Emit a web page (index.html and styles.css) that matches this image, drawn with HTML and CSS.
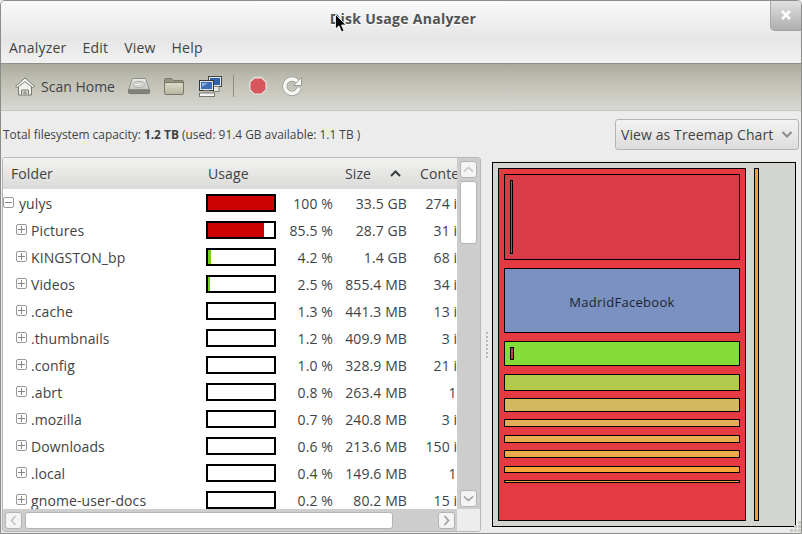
FILE: index.html
```html
<!DOCTYPE html>
<html lang="en">
<head>
    <meta charset="UTF-8">
    <meta name="viewport" content="width=device-width, initial-scale=1.0">
    <title>Disk Usage Analyzer</title>
    <link rel="stylesheet" href="styles.css">
</head>
<body>
<div class="window">
    <div class="top-bar">
        <div class="title">Disk Usage Analyzer</div>
        <div class="menubar">
            <span class="menu-item">Analyzer</span>
            <span class="menu-item">Edit</span>
            <span class="menu-item">View</span>
            <span class="menu-item">Help</span>
        </div>
    </div>
    <div class="close-btn">
        <svg width="12" height="12" viewBox="0 0 12 12"><path d="M2 2 L10 10 M10 2 L2 10" stroke="#fff" stroke-width="2.6"/></svg>
    </div>

    <div class="toolbar">
        <span class="tool tool-home">
            <svg width="22" height="22" viewBox="0 0 22 22">
                <path d="M4.5 10 V20 H17.5 V10 L11 5Z" fill="#f1f1ee" stroke="#77786f"/>
                <path d="M7.5 20 V15 H14.5 V20 M10 20 V17 H12 V20" fill="#d8d8d2" stroke="#77786f"/>
                <path d="M1.5 11.5 L11 3 L20.500 11.500 L18.500 12.500 L11 6.500 L3.500 12.500Z" fill="#fafaf8" stroke="#77786f" stroke-linejoin="round"/>
            </svg>
            Scan Home
        </span>
        <span class="tool tool-drive">
            <svg width="24" height="18" viewBox="0 0 24 18">
                <defs><linearGradient id="dr" x1="0" y1="0" x2="0" y2="1"><stop offset="0" stop-color="#ececea"/><stop offset="1" stop-color="#c4c4c0"/></linearGradient></defs>
                <path d="M5.500 1.500 H18.500 L22.500 13 H1.500Z" fill="url(#dr)" stroke="#90908a"/>
                <path d="M1.500 13 H22.500 V15.500 Q22.500 16.500 21.500 16.500 H2.500 Q1.500 16.500 1.500 15.500Z" fill="#85857e" stroke="#77776f"/>
                <ellipse cx="12" cy="7.500" rx="6" ry="3.200" fill="#d4d4d0" stroke="#b0b0ab"/>
                <rect x="8" y="7" width="5" height="1" fill="#f4f4f2"/>
            </svg>
        </span>
        <span class="tool tool-folder">
            <svg width="20" height="19" viewBox="0 0 20 19">
                <defs><linearGradient id="fo" x1="0" y1="0" x2="0" y2="1"><stop offset="0" stop-color="#dcddc9"/><stop offset="1" stop-color="#b4b59d"/></linearGradient></defs>
                <path d="M.5 3 Q.5 1.500 2 1.500 H7.500 L9.500 3.500 H18 Q19.500 3.500 19.500 5 V9 H.5Z" fill="#95967e" stroke="#77776a"/>
                <rect x=".5" y="5.500" width="19" height="12" rx="1.500" fill="url(#fo)" stroke="#77776a"/>
            </svg>
        </span>
        <span class="tool tool-network">
            <svg width="23" height="21" viewBox="0 0 23 21">
                <rect x="9.500" y=".5" width="13" height="10" fill="#e4e4e0" stroke="#44484a"/>
                <rect x="11" y="2" width="10" height="7" fill="#2f62a8"/>
                <rect x="14" y="10.500" width="6" height="5" fill="#e6e6e2" stroke="#85857f"/>
                <rect x=".5" y="4.500" width="14" height="10" fill="#e4e4e0" stroke="#33383a"/>
                <rect x="2" y="6" width="11" height="7" fill="#3a6db4"/>
                <path d="M3 7 H9 L3 11Z" fill="#86aee0"/>
                <rect x="5" y="14.500" width="5" height="2" fill="#aaa"/>
                <rect x=".5" y="17" width="15" height="3.500" fill="#f6f6f3" stroke="#77776f"/>
            </svg>
        </span>
        <span class="tool-sep"></span>
        <span class="tool tool-stop">
            <svg width="20" height="20" viewBox="0 0 20 20">
                <path d="M6 .8 H14 L19.200 6 V14 L14 19.200 H6 L.8 14 V6Z" fill="#e6e6e2" stroke="#c4c4be"/>
                <path d="M6.500 2.500 H13.500 L17.500 6.500 V13.500 L13.500 17.500 H6.500 L2.500 13.500 V6.500Z" fill="#d9565c"/>
            </svg>
        </span>
        <span class="tool tool-refresh">
            <svg width="21" height="20" viewBox="0 0 21 20">
                <path d="M15.500 5.500 A7.200 7.200 0 1 0 17 12" fill="none" stroke="#9a9a92" stroke-width="5"/>
                <path d="M15.500 5.500 A7.200 7.200 0 1 0 17 12" fill="none" stroke="#f7f7f5" stroke-width="3.600"/>
                <path d="M19.500 1.500 V9.500 H11.500Z" fill="#f7f7f5" stroke="#9a9a92" stroke-linejoin="round"/>
            </svg>
        </span>
    </div>

    <div class="info-row">
        <span class="capacity">Total filesystem capacity: <b>1.2 TB</b> (used: 91.4 GB available: 1.1 TB )</span>
        <span class="combo">
            View as Treemap Chart
            <svg width="12" height="7" viewBox="0 0 12 7"><path d="M1.500 1 L6 5.500 L10.500 1" fill="none" stroke="#8a8a86" stroke-width="2"/></svg>
        </span>
    </div>

    <div class="main">
        <div class="tree-panel">
            <div class="tree-list">
                <div class="tree-cols tree-header">
                    <span class="head-folder">Folder</span>
                    <span class="head-usage">Usage</span>
                    <span></span>
                    <span class="head-size">Size
                        <svg width="11" height="7" viewBox="0 0 11 7"><path d="M1 6 L5.500 1.500 L10 6" fill="none" stroke="#3a3f41" stroke-width="2"/></svg>
                    </span>
                    <span class="head-contents">Contents</span>
                </div>
                <div class="tree-rows">
                    <div class="tree-cols row">
                        <span class="name root"><i class="exp minus"></i>yulys</span>
                        <span class="bar"><span class="fill red" style="width:100%"></span></span>
                        <span class="pct">100 %</span><span class="size">33.5 GB</span>
                        <span class="contents"><span>274 items</span></span>
                    </div>
                    <div class="tree-cols row">
                        <span class="name"><i class="exp"></i>Pictures</span>
                        <span class="bar"><span class="fill red" style="width:85.5%"></span></span>
                        <span class="pct">85.5 %</span><span class="size">28.7 GB</span>
                        <span class="contents"><span>31 items</span></span>
                    </div>
                    <div class="tree-cols row">
                        <span class="name"><i class="exp"></i>KINGSTON_bp</span>
                        <span class="bar"><span class="fill green" style="width:4.2%"></span></span>
                        <span class="pct">4.2 %</span><span class="size">1.4 GB</span>
                        <span class="contents"><span>68 items</span></span>
                    </div>
                    <div class="tree-cols row">
                        <span class="name"><i class="exp"></i>Videos</span>
                        <span class="bar"><span class="fill green" style="width:2.5%"></span></span>
                        <span class="pct">2.5 %</span><span class="size">855.4 MB</span>
                        <span class="contents"><span>34 items</span></span>
                    </div>
                    <div class="tree-cols row">
                        <span class="name"><i class="exp"></i>.cache</span>
                        <span class="bar"></span>
                        <span class="pct">1.3 %</span><span class="size">441.3 MB</span>
                        <span class="contents"><span>13 items</span></span>
                    </div>
                    <div class="tree-cols row">
                        <span class="name"><i class="exp"></i>.thumbnails</span>
                        <span class="bar"></span>
                        <span class="pct">1.2 %</span><span class="size">409.9 MB</span>
                        <span class="contents"><span>3 items</span></span>
                    </div>
                    <div class="tree-cols row">
                        <span class="name"><i class="exp"></i>.config</span>
                        <span class="bar"></span>
                        <span class="pct">1.0 %</span><span class="size">328.9 MB</span>
                        <span class="contents"><span>21 items</span></span>
                    </div>
                    <div class="tree-cols row">
                        <span class="name"><i class="exp"></i>.abrt</span>
                        <span class="bar"></span>
                        <span class="pct">0.8 %</span><span class="size">263.4 MB</span>
                        <span class="contents"><span>1 item</span></span>
                    </div>
                    <div class="tree-cols row">
                        <span class="name"><i class="exp"></i>.mozilla</span>
                        <span class="bar"></span>
                        <span class="pct">0.7 %</span><span class="size">240.8 MB</span>
                        <span class="contents"><span>3 items</span></span>
                    </div>
                    <div class="tree-cols row">
                        <span class="name"><i class="exp"></i>Downloads</span>
                        <span class="bar"></span>
                        <span class="pct">0.6 %</span><span class="size">213.6 MB</span>
                        <span class="contents"><span>150 items</span></span>
                    </div>
                    <div class="tree-cols row">
                        <span class="name"><i class="exp"></i>.local</span>
                        <span class="bar"></span>
                        <span class="pct">0.4 %</span><span class="size">149.6 MB</span>
                        <span class="contents"><span>1 item</span></span>
                    </div>
                    <div class="tree-cols row">
                        <span class="name"><i class="exp"></i>gnome-user-docs</span>
                        <span class="bar"></span>
                        <span class="pct">0.2 %</span><span class="size">80.2 MB</span>
                        <span class="contents"><span>15 items</span></span>
                    </div>
                </div>
            </div>
            <div class="vscroll">
                <span class="sb-btn sb-up"><svg width="11" height="7" viewBox="0 0 11 7"><path d="M1 5.500 L5.500 1.500 L10 5.500" fill="none" stroke="#c4c4c0" stroke-width="1.600"/></svg></span>
                <span class="sb-thumb-v"></span>
                <span class="sb-btn sb-down"><svg width="11" height="7" viewBox="0 0 11 7"><path d="M1 1.500 L5.500 5.500 L10 1.500" fill="none" stroke="#9a9a96" stroke-width="1.600"/></svg></span>
            </div>
            <div class="hscroll">
                <span class="sb-btn sb-left"><svg width="7" height="11" viewBox="0 0 7 11"><path d="M5.500 1 L1.500 5.500 L5.500 10" fill="none" stroke="#c4c4c0" stroke-width="1.600"/></svg></span>
                <span class="sb-thumb-h"></span>
                <span class="sb-btn sb-right"><svg width="7" height="11" viewBox="0 0 7 11"><path d="M1.500 1 L5.500 5.500 L1.500 10" fill="none" stroke="#9a9a96" stroke-width="1.600"/></svg></span>
            </div>
            <div class="corner"></div>
        </div>

        <div class="pane-grip"><i></i><i></i><i></i><i></i><i></i><i></i><i></i></div>

        <svg class="treemap" width="304" height="365" viewBox="492 162 304 365" shape-rendering="crispEdges">
            <rect class="tm" x="492.5" y="162.500" width="303" height="364" fill="#d3d6d0"/>
            <rect class="tm" x="498.500" y="168.500" width="247" height="352" fill="#e63a42"/>
            <rect class="tm" x="754.500" y="168.500" width="4" height="352" fill="#f89e38"/>
            <rect class="tm" x="504.500" y="174.500" width="235" height="85" fill="#d93c48"/>
            <rect class="tm" x="510.500" y="180.500" width="2" height="73" fill="#d93c48"/>
            <rect class="tm" x="504.500" y="268.500" width="235" height="64" fill="#7b91c1"/>
            <text class="tm-label" x="622" y="307" text-anchor="middle">MadridFacebook</text>
            <rect class="tm" x="504.500" y="341.500" width="235" height="24" fill="#86dc36"/>
            <rect class="tm" x="510.500" y="347.500" width="3" height="12" fill="#c4405a"/>
            <rect class="tm" x="504.500" y="374.500" width="235" height="16" fill="#b2ca4c"/>
            <rect class="tm" x="504.500" y="398.500" width="235" height="13" fill="#d5b862"/>
            <rect class="tm" x="504.500" y="419.500" width="235" height="7" fill="#e3ac58"/>
            <rect class="tm" x="504.500" y="435.500" width="235" height="7" fill="#e9ab4f"/>
            <rect class="tm" x="504.500" y="450.500" width="235" height="7" fill="#ecaa49"/>
            <rect class="tm" x="504.500" y="466.500" width="235" height="6" fill="#f8a53a"/>
            <rect class="tm" x="504.500" y="480.500" width="235" height="2" fill="#f0a040"/>
        </svg>
    </div>

    <svg class="resize-grip" width="12" height="12" viewBox="0 0 12 12" fill="#c9ccc4">
        <rect x="9" y="0" width="3" height="3"/>
        <rect x="5" y="4" width="3" height="3"/><rect x="9" y="4" width="3" height="3"/>
        <rect x="1" y="8" width="3" height="3"/><rect x="5" y="8" width="3" height="3"/><rect x="9" y="8" width="3" height="3"/>
    </svg>

    <svg class="mouse-cursor" width="12" height="19" viewBox="0 0 12 19">
        <path d="M.5 .5 V15 L4 11.800 L6.500 17.800 L9 16.800 L6.500 11 H11Z" fill="#000" stroke="#fff" stroke-width=".8"/>
    </svg>
</div>
</body>
</html>
```

FILE: styles.css
```css
* {
    box-sizing: border-box;
}
body {
    margin: 0;
    font-family: "Open Sans", sans-serif;
    color: #3f4345;
    background-color: #ececec;
}
.window {
    position: relative;
    width: 802px;
    height: 534px;
    overflow: hidden;
    display: flex;
    flex-direction: column;
    background-color: #ececec;
    border: 1px solid #8c8c8a;
    border-radius: 5px 5px 0 0;
}
.top-bar {
    height: 63px;
    background: linear-gradient(#fafafa, #e6e6e6 60%, #f1f1f1);
    border-bottom: 1px solid #8f8f8a;
}
.title {
    padding: 8px 0 0 4px;
    height: 37px;
    text-align: center;
    font-size: 14px;
    font-weight: bold;
    letter-spacing: 0.3px;
    color: #4f5355;
    text-shadow: 0 1px 0 #fff;
}
.menubar {
    display: flex;
    padding-left: 8px;
    font-size: 14px;
    letter-spacing: 0.2px;
    line-height: 20px;
}
.menu-item {
    margin-right: 16px;
}
.close-btn {
    position: absolute;
    top: -1px;
    right: 0;
    width: 31px;
    height: 31px;
    display: flex;
    align-items: center;
    justify-content: center;
    background: linear-gradient(#e2e2e2, #aeaeae);
    border-left: 1px solid #a8a8a8;
    border-bottom: 1px solid #a0a0a0;
    border-radius: 0 5px 0 5px;
}
.toolbar {
    height: 47px;
    display: flex;
    align-items: center;
    padding: 0 0 2px 13px;
    font-size: 14px;
    background: linear-gradient(#a9a99c, #bcbcb0 30%, #d8d8d3);
    border-bottom: 1px solid #c6c6c4;
}
.tool {
    display: flex;
    align-items: center;
}
.tool-home svg {
    margin-right: 5px;
}
.tool-drive {
    margin-left: 12px;
}
.tool-folder {
    margin-left: 13px;
}
.tool-network {
    margin-left: 15px;
}
.tool-sep {
    width: 1px;
    height: 22px;
    margin: 0 14px 0 11px;
    background-color: #8e8e84;
}
.tool-refresh {
    margin-left: 14px;
}
.info-row {
    height: 46px;
    display: flex;
    align-items: center;
    justify-content: space-between;
    padding: 0 2px;
    font-size: 11.9px;
}
.capacity b {
    font-weight: bold;
}
.combo {
    width: 184px;
    height: 31px;
    display: flex;
    align-items: center;
    justify-content: space-between;
    padding: 0 5px 0 5px;
    font-size: 14px;
    letter-spacing: 0.1px;
    background: linear-gradient(#f3f3f3, #dcdcdc);
    border: 1px solid #b4b4b2;
    border-radius: 3px;
}
.main {
    flex: 1;
    display: flex;
    align-items: flex-start;
    padding-left: 1px;
}
.tree-panel {
    width: 479px;
    height: 375px;
    display: grid;
    grid-template-columns: 454px 23px;
    grid-template-rows: 351px 22px;
    border: 1px solid #b8b8b6;
    border-radius: 3px;
    overflow: hidden;
}
.tree-list {
    overflow: hidden;
    background-color: #fff;
    font-size: 14px;
    letter-spacing: 0.1px;
}
.tree-cols {
    display: grid;
    grid-template-columns: 203px 70px 57px 74px 50px;
    align-items: center;
}
.tree-header {
    height: 31px;
    background: linear-gradient(#f2f2f0, #dadad8);
}
.head-folder {
    padding-left: 8px;
}
.head-usage {
    padding-left: 2px;
}
.head-size {
    display: flex;
    align-items: center;
    justify-content: space-between;
    grid-column: 4;
    width: 56px;
    margin-left: 12px;
}
.head-contents {
    padding-left: 13px;
    white-space: nowrap;
    overflow: hidden;
}
.tree-rows {
    height: 320px;
    overflow: hidden;
}
.row {
    height: 27px;
}
.name {
    display: flex;
    align-items: center;
    padding: 2px 0 0 13px;
    white-space: nowrap;
}
.name.root {
    padding-left: 0;
}
.name.root .exp {
    margin-right: 5px;
}
.exp {
    width: 11px;
    height: 11px;
    margin: -2px 4px 0 0;
    border: 1px solid #999;
    border-radius: 2px;
    background:
        linear-gradient(#888, #888) center / 7px 1px no-repeat,
        linear-gradient(#888, #888) center / 1px 7px no-repeat;
}
.exp.minus {
    background: linear-gradient(#888, #888) center / 7px 1px no-repeat;
}
.bar {
    display: block;
    height: 18px;
    background-color: #fff;
    border: 2px solid #000;
}
.fill {
    display: block;
    height: 100%;
}
.fill.red {
    background-color: #cc0000;
}
.fill.green {
    background-color: #73d216;
}
.pct,
.size {
    padding-top: 2px;
    text-align: right;
    white-space: nowrap;
}
.contents {
    display: block;
    padding-top: 2px;
    overflow: hidden;
    white-space: nowrap;
}
.contents span {
    display: block;
    width: 83px;
    text-align: right;
}
.vscroll {
    grid-column: 2;
    grid-row: 1;
    display: flex;
    flex-direction: column;
    align-items: center;
    padding: 3px 0 2px;
    background-color: #cdcdcd;
}
.hscroll {
    grid-column: 1;
    grid-row: 2;
    display: flex;
    align-items: center;
    padding: 0 2px;
    background-color: #cdcdcd;
}
.corner {
    background-color: #ececec;
}
.sb-btn {
    display: flex;
    align-items: center;
    justify-content: center;
    background-color: #f4f4f4;
    border: 1px solid #b4b4b4;
    border-radius: 3px;
}
.sb-up,
.sb-down,
.sb-left,
.sb-right {
    width: 17px;
    height: 17px;
}
.sb-thumb-v {
    width: 17px;
    height: 63px;
    margin-top: 3px;
    background-color: #fff;
    border: 1px solid #b4b4b4;
    border-radius: 3px;
}
.sb-down {
    margin-top: auto;
}
.sb-thumb-h {
    width: 368px;
    height: 17px;
    margin-left: 3px;
    background-color: #fff;
    border: 1px solid #b4b4b4;
    border-radius: 3px;
}
.sb-right {
    margin-left: auto;
}
.pane-grip {
    width: 11px;
    height: 375px;
    display: flex;
    flex-direction: column;
    align-items: center;
    justify-content: center;
    gap: 2px;
}
.pane-grip i {
    width: 2px;
    height: 2px;
    background-color: #b8b8b4;
}
.treemap {
    display: block;
    margin-top: 5px;
}
.tm {
    stroke: #000;
    stroke-width: 1;
}
.tm-label {
    font-family: "Open Sans", sans-serif;
    font-size: 13px;
    letter-spacing: 0.3px;
    fill: #1c2330;
}
.resize-grip {
    position: absolute;
    right: 0;
    bottom: 0;
}
.mouse-cursor {
    position: absolute;
    left: 334px;
    top: 13px;
}
```
